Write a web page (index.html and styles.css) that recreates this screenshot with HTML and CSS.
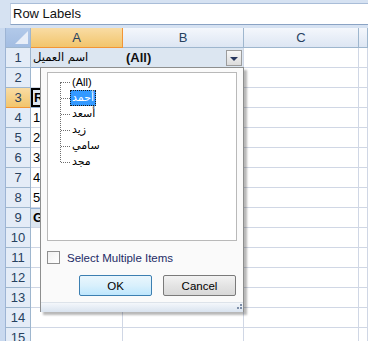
FILE: index.html
```html
<!DOCTYPE html>
<html lang="ar">

<head>
    <meta charset="UTF-8">
    <meta name="viewport" content="width=device-width, initial-scale=1.0">
    <title>Pivot filter</title>
    <link rel="stylesheet" href="styles.css">
</head>

<body dir="ltr">
    <div class="fbar">
        <div class="fx-field">Row Labels</div>
    </div>

    <div class="sheet">
        <div class="row head">
            <div class="strip"></div>
            <div class="corner"></div>
            <div class="ch col-a active">A</div>
            <div class="ch col-b">B</div>
            <div class="ch col-c">C</div>
            <div class="ch col-d"></div>
        </div>
        <div class="row">
            <div class="strip"></div>
            <div class="rh">1</div>
            <div class="cell col-a page"><span dir="rtl">اسم العميل</span></div>
            <div class="cell col-b page">
                <b>(All)</b>
                <span class="dd-btn"></span>
            </div>
            <div class="cell col-c"></div>
            <div class="cell col-d"></div>
        </div>
        <div class="row">
            <div class="strip"></div>
            <div class="rh">2</div>
            <div class="cell col-a"></div>
            <div class="cell col-b"></div>
            <div class="cell col-c"></div>
            <div class="cell col-d"></div>
        </div>
        <div class="row">
            <div class="strip"></div>
            <div class="rh active">3</div>
            <div class="cell col-a pivot-head current"><b>Row Labels</b></div>
            <div class="cell col-b pivot-head"></div>
            <div class="cell col-c"></div>
            <div class="cell col-d"></div>
        </div>
        <div class="row">
            <div class="strip"></div>
            <div class="rh">4</div>
            <div class="cell col-a">1</div>
            <div class="cell col-b"></div>
            <div class="cell col-c"></div>
            <div class="cell col-d"></div>
        </div>
        <div class="row">
            <div class="strip"></div>
            <div class="rh">5</div>
            <div class="cell col-a">2</div>
            <div class="cell col-b"></div>
            <div class="cell col-c"></div>
            <div class="cell col-d"></div>
        </div>
        <div class="row">
            <div class="strip"></div>
            <div class="rh">6</div>
            <div class="cell col-a">3</div>
            <div class="cell col-b"></div>
            <div class="cell col-c"></div>
            <div class="cell col-d"></div>
        </div>
        <div class="row">
            <div class="strip"></div>
            <div class="rh">7</div>
            <div class="cell col-a">4</div>
            <div class="cell col-b"></div>
            <div class="cell col-c"></div>
            <div class="cell col-d"></div>
        </div>
        <div class="row">
            <div class="strip"></div>
            <div class="rh">8</div>
            <div class="cell col-a">5</div>
            <div class="cell col-b"></div>
            <div class="cell col-c"></div>
            <div class="cell col-d"></div>
        </div>
        <div class="row">
            <div class="strip"></div>
            <div class="rh">9</div>
            <div class="cell col-a pivot-total"><b>Grand Total</b></div>
            <div class="cell col-b pivot-total"></div>
            <div class="cell col-c"></div>
            <div class="cell col-d"></div>
        </div>
        <div class="row">
            <div class="strip"></div>
            <div class="rh">10</div>
            <div class="cell col-a"></div>
            <div class="cell col-b"></div>
            <div class="cell col-c"></div>
            <div class="cell col-d"></div>
        </div>
        <div class="row">
            <div class="strip"></div>
            <div class="rh">11</div>
            <div class="cell col-a"></div>
            <div class="cell col-b"></div>
            <div class="cell col-c"></div>
            <div class="cell col-d"></div>
        </div>
        <div class="row">
            <div class="strip"></div>
            <div class="rh">12</div>
            <div class="cell col-a"></div>
            <div class="cell col-b"></div>
            <div class="cell col-c"></div>
            <div class="cell col-d"></div>
        </div>
        <div class="row">
            <div class="strip"></div>
            <div class="rh">13</div>
            <div class="cell col-a"></div>
            <div class="cell col-b"></div>
            <div class="cell col-c"></div>
            <div class="cell col-d"></div>
        </div>
        <div class="row">
            <div class="strip"></div>
            <div class="rh">14</div>
            <div class="cell col-a"></div>
            <div class="cell col-b"></div>
            <div class="cell col-c"></div>
            <div class="cell col-d"></div>
        </div>
        <div class="row">
            <div class="strip"></div>
            <div class="rh">15</div>
            <div class="cell col-a"></div>
            <div class="cell col-b"></div>
            <div class="cell col-c"></div>
            <div class="cell col-d"></div>
        </div>
    </div>

    <!-- filter dropdown of the page field -->
    <div class="popup">
        <div class="list">
            <ul class="tree">
                <li><span class="label">(All)</span></li>
                <li><span class="label selected" dir="rtl">أحمد</span></li>
                <li><span class="label" dir="rtl">أسعد</span></li>
                <li><span class="label" dir="rtl">زيد</span></li>
                <li><span class="label" dir="rtl">سامي</span></li>
                <li><span class="label" dir="rtl">مجد</span></li>
            </ul>
        </div>
        <label class="multi">
            <span class="check"></span>
            <span>Select Multiple Items</span>
        </label>
        <div class="buttons">
            <button class="btn default">OK</button>
            <button class="btn">Cancel</button>
        </div>
        <div class="grip-bar">
            <svg class="grip" width="7" height="7" viewBox="0 0 7 7">
                <rect x="5" y="0" width="2" height="2" fill="#7d8ea8" />
                <rect x="2" y="3" width="2" height="2" fill="#7d8ea8" />
                <rect x="5" y="3" width="2" height="2" fill="#7d8ea8" />
                <rect x="0" y="5" width="2" height="2" fill="#7d8ea8" opacity="0" />
            </svg>
        </div>
    </div>
</body>
</html>
```

FILE: styles.css
```css
body {
    margin: 0;
    width: 368px;
    height: 341px;
    overflow: hidden;
    position: relative;
    background: #ffffff;
    font-family: "Liberation Sans", "DejaVu Sans", sans-serif;
    color: #000;
}

/* formula bar */
.fbar {
    height: 28px;
    box-sizing: border-box;
    padding: 3px 0 0 10px;
    background: #d6e2f2;
}

.fx-field {
    height: 22px;
    box-sizing: border-box;
    border-top: 1px solid #a9bdd8;
    border-bottom: 1px solid #8aa3c4;
    border-left: 1px solid #c3d1e4;
    background: #fff;
    padding-left: 2px;
    font-size: 13px;
    line-height: 20px;
    color: #111;
}

/* sheet grid */
.row {
    display: flex;
    height: 20px;
}

.strip {
    width: 6px;
    flex: none;
    box-sizing: border-box;
    background: #c9d9ef;
    border-right: 1px solid #9db4d4;
}

.corner {
    width: 25px;
    flex: none;
    box-sizing: border-box;
    border-right: 1px solid #9eb6ce;
    border-bottom: 1px solid #9eb6ce;
    background: linear-gradient(135deg, #a7c0e3 55%, #e9f0fa 56%, #c6d6ec 100%);
    background: linear-gradient(#b2c9e9, #a3bde2);
    position: relative;
}

.corner::after {
    content: "";
    position: absolute;
    right: 2px;
    bottom: 3px;
    width: 0;
    height: 0;
    border-left: 13px solid transparent;
    border-bottom: 13px solid #e8eef8;
}

.ch {
    box-sizing: border-box;
    flex: none;
    border-right: 1px solid #9eb6ce;
    border-bottom: 1px solid #9eb6ce;
    background: linear-gradient(#f4f7fc, #dde6f3);
    text-align: center;
    font-size: 13px;
    line-height: 19px;
    color: #27415f;
}

.ch.active {
    background: linear-gradient(#f9dca4, #f2c56c);
    border-right-color: #f29536;
    border-bottom-color: #f29536;
}

.rh {
    width: 25px;
    flex: none;
    box-sizing: border-box;
    border-right: 1px solid #9eb6ce;
    border-bottom: 1px solid #9eb6ce;
    background: #e4ecf7;
    text-align: center;
    font-size: 13px;
    line-height: 19px;
    color: #27415f;
}

.rh.active {
    background: linear-gradient(#f9dca4, #f2c56c);
    border-bottom-color: #f29536;
}

.col-a { width: 92px; }
.col-b { width: 121px; }
.col-c { width: 115px; }
.col-d { flex: 1; }

.cell {
    flex: none;
    box-sizing: border-box;
    border-right: 1px solid #d0d7e5;
    border-bottom: 1px solid #d0d7e5;
    font-size: 13px;
    line-height: 19px;
    padding-left: 2px;
    white-space: nowrap;
    overflow: hidden;
}

.cell.col-d {
    flex: 1;
}

.cell.page {
    background: #dce6f1;
    border-right-color: #dce6f1;
    border-bottom: 1px solid #95b3d7;
    position: relative;
    display: flex;
    align-items: center;
}

.cell.page span {
    font-family: "DejaVu Sans", sans-serif;
    font-size: 11.5px;
}

.cell.col-b.page {
    border-right-color: #d0d7e5;
    padding-left: 3px;
}

.cell.page b {
    font-size: 13px;
    color: #111;
}

.dd-btn {
    position: absolute;
    right: 1px;
    top: 2px;
    width: 16px;
    height: 16px;
    box-sizing: border-box;
    border: 1px solid #9c9c9c;
    background: linear-gradient(#f7f7f7, #dcdcdc);
}

.dd-btn::after {
    content: "";
    position: absolute;
    left: 3px;
    top: 6px;
    border-left: 4px solid transparent;
    border-right: 4px solid transparent;
    border-top: 4px solid #27365e;
}

.pivot-head {
    background: #dce6f1;
    border-bottom-color: #95b3d7;
}

.pivot-head.current {
    box-shadow: inset 0 0 0 2px #000;
    padding-left: 3px;
}

.pivot-total {
    background: #dce6f1;
    border-top: 1px solid #95b3d7;
    line-height: 18px;
}

/* popup */
.popup {
    position: absolute;
    left: 40px;
    top: 67px;
    width: 204px;
    height: 245px;
    box-sizing: border-box;
    border: 1px solid #8e8f8f;
    background: #fafafa;
    box-shadow: 3px 3px 2px rgba(0, 0, 0, 0.28);
    font-size: 11.5px;
}

.list {
    margin: 4px 6px 0 6px;
    height: 169px;
    box-sizing: border-box;
    border: 1px solid #b9b9b9;
    background: #fff;
    padding-top: 1px;
}

.tree {
    list-style: none;
    margin: 0;
    padding: 0 0 0 22px;
    position: relative;
}

.tree::before {
    content: "";
    position: absolute;
    left: 12px;
    top: 8px;
    bottom: 8px;
    border-left: 1px dotted #6f6f6f;
}

.tree li {
    height: 16px;
    display: flex;
    align-items: center;
    position: relative;
}

.tree li::before {
    content: "";
    position: absolute;
    left: -9px;
    top: 8px;
    width: 9px;
    border-top: 1px dotted #6f6f6f;
}

.label {
    font-family: "Liberation Sans", "DejaVu Sans", sans-serif;
    font-size: 11px;
    line-height: 14px;
    padding: 0 1px;
    border: 1px solid transparent;
}

.label[dir="rtl"] {
    font-family: "DejaVu Sans", sans-serif;
    font-size: 11px;
}

.label.selected {
    background: #3399ff;
    color: #fff;
    border: 1px dotted #1a1a1a;
}

.multi {
    display: flex;
    align-items: center;
    margin: 10px 0 0 6px;
    height: 13px;
    gap: 7px;
    color: #1d2b66;
}

.check {
    width: 13px;
    height: 13px;
    box-sizing: border-box;
    border: 1px solid #8f8f8f;
    background: linear-gradient(135deg, #f0f0f0, #ffffff);
}

.buttons {
    display: flex;
    justify-content: flex-end;
    gap: 11px;
    margin: 11px 7px 0 0;
}

.btn {
    width: 73px;
    height: 21px;
    box-sizing: border-box;
    border: 1px solid #7a7a7a;
    border-radius: 2px;
    background: linear-gradient(#f2f2f2, #e4e4e4 50%, #d8d8d8);
    font-family: "Liberation Sans", sans-serif;
    font-size: 11.5px;
    color: #000;
    padding: 0;
}

.btn.default {
    border-color: #3c7fb1;
    background: linear-gradient(#eaf6fd, #d9f0fc 50%, #bee6fd);
}

.grip-bar {
    margin-top: 6px;
    height: 9px;
    border-top: 1px solid #dde3ea;
    background: linear-gradient(#f4f7fb, #d9e3ef);
    display: flex;
    justify-content: flex-end;
    align-items: flex-end;
    padding-right: 1px;
}

.grip {
    display: block;
    margin-bottom: 1px;
}
```
